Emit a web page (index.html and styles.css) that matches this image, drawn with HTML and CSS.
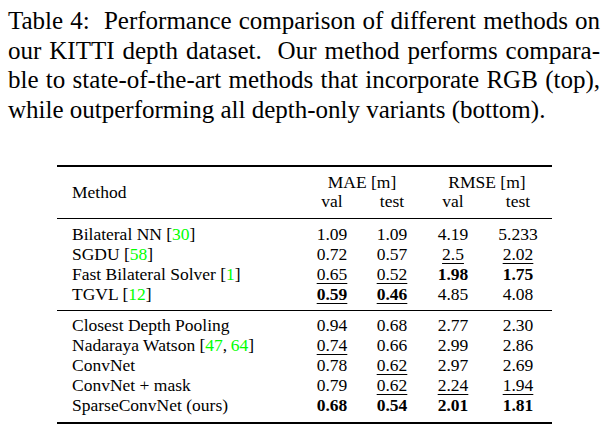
FILE: index.html
```html
<!DOCTYPE html>
<html>
<head>
<meta charset="utf-8">
<link rel="stylesheet" href="styles.css">
</head>
<body>
<div class="caption">
  <div class="line">Table 4:&nbsp; Performance comparison of different methods on</div>
  <div class="line">our KITTI depth dataset.&nbsp; Our method performs compara-</div>
  <div class="line">ble to state-of-the-art methods that incorporate RGB (top),</div>
  <div class="line last">while outperforming all depth-only variants (bottom).</div>
</div>

<div class="tbl">
  <div class="head">
    <div class="method-h">Method</div>
    <div class="grp mae">MAE [m]</div>
    <div class="grp rmse">RMSE [m]</div>
    <div class="num">val</div>
    <div class="num">test</div>
    <div class="num">val</div>
    <div class="num">test</div>
  </div>

  <div class="group top">
    <div class="row"><div class="m">Bilateral NN [<span class="cite">30</span>]</div><div class="num">1.09</div><div class="num">1.09</div><div class="num">4.19</div><div class="num">5.233</div></div>
    <div class="row"><div class="m">SGDU [<span class="cite">58</span>]</div><div class="num">0.72</div><div class="num">0.57</div><div class="num"><span class="u">2.5</span></div><div class="num"><span class="u">2.02</span></div></div>
    <div class="row"><div class="m">Fast Bilateral Solver [<span class="cite">1</span>]</div><div class="num"><span class="u">0.65</span></div><div class="num"><span class="u">0.52</span></div><div class="num"><b>1.98</b></div><div class="num"><b>1.75</b></div></div>
    <div class="row"><div class="m">TGVL [<span class="cite">12</span>]</div><div class="num"><b class="u">0.59</b></div><div class="num"><b class="u">0.46</b></div><div class="num">4.85</div><div class="num">4.08</div></div>
  </div>

  <div class="group bottom">
    <div class="row"><div class="m">Closest Depth Pooling</div><div class="num">0.94</div><div class="num">0.68</div><div class="num">2.77</div><div class="num">2.30</div></div>
    <div class="row"><div class="m">Nadaraya Watson [<span class="cite">47</span>,&thinsp;<span class="cite">64</span>]</div><div class="num"><span class="u">0.74</span></div><div class="num">0.66</div><div class="num">2.99</div><div class="num">2.86</div></div>
    <div class="row"><div class="m">ConvNet</div><div class="num">0.78</div><div class="num"><span class="u">0.62</span></div><div class="num">2.97</div><div class="num">2.69</div></div>
    <div class="row"><div class="m">ConvNet + mask</div><div class="num">0.79</div><div class="num"><span class="u">0.62</span></div><div class="num"><span class="u">2.24</span></div><div class="num"><span class="u">1.94</span></div></div>
    <div class="row"><div class="m">SparseConvNet (ours)</div><div class="num"><b>0.68</b></div><div class="num"><b>0.54</b></div><div class="num"><b>2.01</b></div><div class="num"><b>1.81</b></div></div>
  </div>
</div>
</body>
</html>
```

FILE: styles.css
```css
html, body {
  margin: 0;
  padding: 0;
  background: #ffffff;
  color: #000000;
  font-family: "Liberation Serif", "Times New Roman", serif;
}

.caption {
  padding: 6px 0 0 8px;
  width: 592px;
  font-size: 25px;
  line-height: 29.5px;
}

.caption .line {
  text-align: justify;
  text-align-last: justify;
  white-space: nowrap;
}

.caption .line.last {
  text-align: left;
  text-align-last: left;
}

.tbl {
  margin: 41px 0 0 57px;
  width: 495px;
  font-size: 17.5px;
}

.head {
  display: grid;
  grid-template-columns: 245px 60px 60px 62px 68px;
  grid-template-rows: 19px 19px;
  border-top: 2px solid #000;
  border-bottom: 1px solid #000;
  padding: 6px 0 7px 0;
  line-height: 19px;
}

.method-h {
  grid-row: 1 / span 2;
  align-self: center;
  padding-left: 15px;
}

.grp.mae {
  grid-column: 2 / span 2;
  text-align: center;
}

.grp.rmse {
  grid-column: 4 / span 2;
  text-align: center;
}

.num {
  text-align: center;
}

.group.top {
  padding: 5px 0 6px 0;
}

.group.bottom {
  border-top: 1px solid #000;
  border-bottom: 2px solid #000;
  padding: 4px 0 7px 0;
}

.row {
  display: grid;
  grid-template-columns: 245px 60px 60px 62px 68px;
  line-height: 20px;
  height: 20px;
}

.m {
  padding-left: 15px;
  white-space: nowrap;
}

.cite {
  color: #00ff00;
}

.u {
  text-decoration: underline;
  text-decoration-thickness: 1px;
  text-underline-offset: 3px;
}
```
